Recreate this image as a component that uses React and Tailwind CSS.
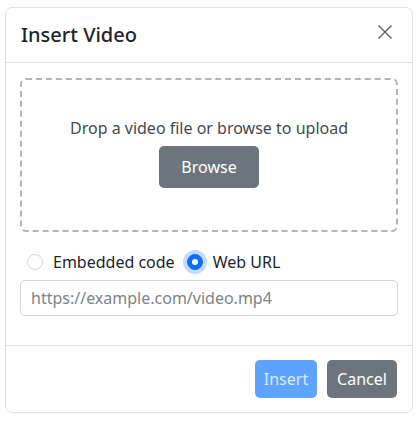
import { useState } from 'react'

function CloseIcon() {
  return (
    <svg width="16" height="16" viewBox="0 0 16 16" fill="none" stroke="currentColor" strokeWidth="1.3">
      <path d="M1.5 1.5 L14.5 14.5 M14.5 1.5 L1.5 14.5" />
    </svg>
  )
}

function Radio({ checked, focused, label, onChange }) {
  return (
    <label className="flex items-center gap-[10px] cursor-pointer">
      <span
        className={
          checked
            ? 'w-4 h-4 rounded-full bg-[#0d6efd] border border-[#0d6efd] flex items-center justify-center ' +
              (focused ? 'shadow-[0_0_0_4px_rgba(13,110,253,0.25)]' : '')
            : 'w-4 h-4 rounded-full bg-white border border-[#d3d7dc]'
        }
        onClick={onChange}
      >
        {checked && <span className="w-[6px] h-[6px] rounded-full bg-white" />}
      </span>
      <span className="text-base text-[#212529]" onClick={onChange}>{label}</span>
    </label>
  )
}

export default function App() {
  const [mode, setMode] = useState('url')
  const [url, setUrl] = useState('')

  return (
    <div className="w-[420px] h-[421px] bg-white pt-[7px] pl-[5px] font-['Segoe_UI','Noto_Sans',sans-serif]">
      <div className="w-[408px] h-[406px] border border-[#dee2e6] rounded-[7px] flex flex-col">
        {/* header */}
        <div className="h-[55px] border-b border-[#dee2e6] flex items-center justify-between pl-[15px] pr-[19px]">
          <h5 className="text-[20px] font-medium text-[#212529] leading-none">Insert Video</h5>
          <button className="text-[#555b61] mt-[-6px]">
            <CloseIcon />
          </button>
        </div>

        {/* body */}
        <div className="px-[14px] pt-[15px] pb-[29px] border-b border-[#dee2e6]">
          <div className="h-[154px] border-2 border-dashed border-[#b0b5ba] rounded-[6px] flex flex-col items-center justify-center pb-[6px]">
            <p className="text-base leading-6 text-[#444a50]">Drop a video file or browse to upload</p>
            <button className="mt-[6px] w-[100px] h-[42px] rounded-[5px] bg-[#6c757d] text-white text-base">
              Browse
            </button>
          </div>

          <div className="flex items-center gap-3 mt-[18px] pl-[7px] h-6">
            <Radio checked={mode === 'embed'} label="Embedded code" onChange={() => setMode('embed')} />
            <Radio checked={mode === 'url'} focused label="Web URL" onChange={() => setMode('url')} />
          </div>

          <input
            type="text"
            value={url}
            onChange={(e) => setUrl(e.target.value)}
            placeholder="https://example.com/video.mp4"
            className="mt-[6px] w-full h-[36px] border border-[#d3d7dc] rounded-[5px] px-[10px] text-base text-[#212529] placeholder:text-[#7c838a] outline-none"
          />
        </div>

        {/* footer */}
        <div className="flex-1 flex items-center justify-end gap-[10px] pr-[15px]">
          <button disabled className="w-[62px] h-[38px] rounded-[5px] bg-[#5ea3ff] text-[#dbe9ff] text-base">
            Insert
          </button>
          <button className="w-[70px] h-[38px] rounded-[5px] bg-[#6c757d] text-white text-base">
            Cancel
          </button>
        </div>
      </div>
    </div>
  )
}
